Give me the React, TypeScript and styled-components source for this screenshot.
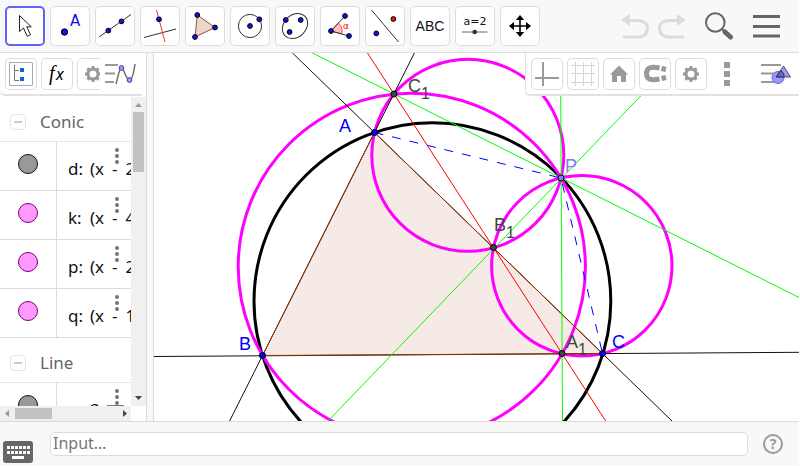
import React from "react";
import styled, { createGlobalStyle, css } from "styled-components";

const GlobalStyle = createGlobalStyle`
  * { box-sizing: border-box; }
  body { margin: 0; background: #fff; font-family: "Noto Sans", "Open Sans", sans-serif; }
  button { font: inherit; cursor: pointer; }
`;

const Page = styled.div`
  display: flex;
  flex-direction: column;
  height: 100vh;
  padding: 0 1px 1px 0;
  overflow: hidden;
`;

const Header = styled.header`
  display: flex;
  justify-content: space-between;
  align-items: center;
  flex: none;
  height: 53px;
  padding: 0 18px 0 5px;
  background: #f8f8f8;
  border-bottom: 1px solid #dcdcdc;
`;

const ToolList = styled.div`
  display: flex;
  gap: 5px;
`;

const ToolButton = styled.button<{ $active?: boolean }>`
  width: 40px;
  height: 40px;
  padding: 0;
  border: 0;
  border-radius: 5px;
  background: #fff;
  box-shadow: inset 0 0 0 ${(p) => (p.$active ? "2px #6161ff" : "1px #dcdcdc")};
  svg { display: block; }
`;

const HeaderActions = styled.div`
  display: flex;
  align-items: center;
  gap: 9px;
`;

const PlainButton = styled.button`
  display: block;
  flex: none;
  padding: 0;
  border: 0;
  background: none;
  svg { display: block; }
`;

const SearchButton = styled(PlainButton)`
  margin-left: 10px;
`;

const MenuButton = styled(PlainButton)`
  margin-left: 9px;
`;

const Workspace = styled.main`
  display: flex;
  flex: 1;
  min-height: 0;
`;

const AlgebraPanel = styled.section`
  display: flex;
  flex-direction: column;
  flex: none;
  width: 147px;
  border-right: 1px solid #dcdcdc;
`;

const Splitter = styled.div`
  flex: none;
  width: 7px;
  background: #f8f8f8;
  border-right: 1px solid #dcdcdc;
`;

const barStyle = css`
  display: flex;
  align-items: center;
  height: 43px;
  background: #fff;
  border-bottom: 2px solid #e2e2e2;
  border-bottom-left-radius: 5px;
`;

const AlgebraBar = styled.div`
  ${barStyle}
  flex: none;
  margin-right: 4px;
  padding-left: 5px;
`;

const BarButtons = styled.div`
  display: flex;
  gap: 4px;
  width: 95px;
  overflow: hidden;
`;

const SmallButton = styled.button`
  flex: none;
  width: 32px;
  height: 32px;
  padding: 0;
  border: 0;
  border-radius: 5px;
  background: #fff;
  box-shadow: inset 0 0 0 1px #dcdcdc;
  svg { display: block; }
`;

const CurveButton = styled(PlainButton)`
  margin-left: 4px;
`;

const ListArea = styled.div`
  display: grid;
  grid-template-columns: minmax(0, 1fr) 15px;
  grid-template-rows: minmax(0, 1fr) 15px;
  flex: 1;
  min-height: 0;
  margin-top: 1px;
`;

const ObjectList = styled.div`
  overflow: hidden;
`;

const Group = styled.div`
  display: flex;
  align-items: center;
  gap: 14px;
  height: 45px;
  padding: 5px 0 0 10px;
  border-bottom: 1px solid #e6e6e6;
  color: #666;
  font-size: 17px;
  line-height: 24px;
`;

const Collapse = styled.button`
  width: 16px;
  height: 16px;
  padding: 0 3px;
  border: 1px solid #e4e4e4;
  border-radius: 4px;
  background: #fff;
  &::before {
    content: "";
    display: block;
    height: 2px;
    background: #ccc;
  }
`;

const ObjectRow = styled.div`
  display: flex;
  height: 49px;
  border-bottom: 1px solid #dcdcdc;
`;

const MarkerCell = styled.div`
  display: flex;
  justify-content: center;
  flex: none;
  width: 57px;
  padding-top: 12px;
  border-right: 1px solid #dcdcdc;
`;

const Marker = styled.button<{ $tone: "gray" | "pink" }>`
  width: 20px;
  height: 20px;
  padding: 0;
  border: 1px solid ${(p) => (p.$tone === "gray" ? "#111" : "#7a007a")};
  border-radius: 50%;
  background: ${(p) => (p.$tone === "gray" ? "#999" : "#ff99ff")};
`;

const Formula = styled.div`
  position: relative;
  flex: 1;
  min-width: 0;
  padding: 15px 0 0 11px;
  overflow: hidden;
  white-space: nowrap;
  color: #111;
  font-size: 17px;
  line-height: 24px;
`;

const ObjectName = styled.span`
  display: inline-block;
  width: 14px;
`;

const Term = styled.span`
  margin-left: 8px;
`;

const RootSign = styled.span`
  display: inline-block;
  width: 17px;
  height: 16px;
  margin-left: 7px;
  border: solid #777;
  border-width: 1px 0 0 1px;
  vertical-align: text-bottom;
`;

const MoreButton = styled.button`
  position: absolute;
  top: 6px;
  right: 12px;
  display: flex;
  flex-direction: column;
  gap: 2px;
  padding: 0;
  border: 0;
  background: none;
`;

const Dot = styled.span`
  width: 4px;
  height: 4px;
  border-radius: 50%;
  background: #757575;
`;

const ScrollTrack = styled.div<{ $horizontal?: boolean }>`
  display: flex;
  flex-direction: ${(p) => (p.$horizontal ? "row" : "column")};
  align-items: center;
  justify-content: space-between;
  background: #f0f0f0;
  svg { display: block; flex: none; }
`;

const ScrollThumb = styled.div<{ $horizontal?: boolean }>`
  flex: none;
  width: ${(p) => (p.$horizontal ? "37px" : "11px")};
  height: ${(p) => (p.$horizontal ? "11px" : "60px")};
  background: #c1c1c1;
`;

const ScrollSpace = styled.div`
  flex: 1;
`;

const GraphicsPanel = styled.section`
  position: relative;
  flex: 1;
  min-width: 0;
  overflow: hidden;
`;

const Drawing = styled.svg`
  display: block;
  width: 100%;
  height: 100%;
  font-family: "Liberation Sans", Arial, sans-serif;
`;

const GraphicsBar = styled.div`
  ${barStyle}
  position: absolute;
  top: 0;
  right: 0;
  gap: 4px;
  padding: 0 6px 0 5px;
  border-left: 1px solid #e2e2e2;
`;

const MoreOptions = styled(PlainButton)`
  display: flex;
  flex-direction: column;
  gap: 3px;
  margin: 0 27px 0 13px;
`;

const Square = styled.span`
  width: 6px;
  height: 6px;
  background: #999;
`;

const InputBar = styled.footer`
  display: flex;
  align-items: center;
  flex: none;
  height: 44px;
  padding: 0 16px 0 3px;
  background: #f8f8f8;
  border-top: 1px solid #dcdcdc;
`;

const KeyboardButton = styled(PlainButton)`
  align-self: flex-end;
  margin-bottom: 2px;
`;

const CommandInput = styled.input`
  flex: 1;
  min-width: 0;
  height: 24px;
  margin: 0 15px 0 17px;
  padding: 0 2px 2px;
  border: 1px solid #dcdcdc;
  border-radius: 5px;
  background: #fff;
  color: #222;
  font: 16px/20px "Noto Sans", "Open Sans", sans-serif;
  &::placeholder { color: #757575; opacity: 1; }
`;

type Pt = [number, number];

const Node = ({ at, fill = "#1010ee", r = 2.4 }: { at: Pt; fill?: string; r?: number }) => (
  <circle cx={at[0]} cy={at[1]} r={r} fill={fill} stroke="#000" strokeWidth="1" />
);

const tools: { name: string; icon: React.ReactNode }[] = [
  {
    name: "Move",
    icon: <path d="M14.5 9.5V25.5L18.5 22L22.2 30.3L25.5 28.8L21.8 20.8H26.3Z" fill="#fff" stroke="#222" />,
  },
  {
    name: "Point",
    icon: (
      <>
        <Node at={[14.5, 26]} r={3.2} />
        <text x="20" y="20" fontFamily="DejaVu Sans, sans-serif" fontSize="15" fill="#1010ee">A</text>
      </>
    ),
  },
  {
    name: "Line",
    icon: (
      <>
        <path d="M4 31L36 8.5" stroke="#333" />
        <Node at={[13.3, 24.6]} />
        <Node at={[26.5, 15.4]} />
      </>
    ),
  },
  {
    name: "Perpendicular line",
    icon: (
      <>
        <path d="M4 31.5L36 23" stroke="#333" />
        <path d="M16.5 4L25 36" stroke="#f33" />
        <Node at={[19, 13.3]} />
      </>
    ),
  },
  {
    name: "Polygon",
    icon: (
      <>
        <path d="M12.3 9L30 21.5L10 31Z" fill="#ebd6cc" stroke="#995033" />
        <Node at={[12.3, 9]} />
        <Node at={[30, 21.5]} />
        <Node at={[10, 31]} />
      </>
    ),
  },
  {
    name: "Circle with center",
    icon: (
      <>
        <circle cx="20" cy="20" r="11.6" stroke="#333" />
        <Node at={[20, 20]} />
        <Node at={[29.3, 13.3]} />
      </>
    ),
  },
  {
    name: "Ellipse",
    icon: (
      <>
        <ellipse cx="20" cy="20" rx="14" ry="11" transform="rotate(-45 20 20)" stroke="#333" />
        <Node at={[10.8, 14]} />
        <Node at={[25.7, 14]} />
        <Node at={[14.6, 26]} />
      </>
    ),
  },
  {
    name: "Angle",
    icon: (
      <>
        <path d="M11 25L18.4 17A11 11 0 0 1 21.7 28Z" fill="#ffbfbf" stroke="#f55" />
        <path d="M25 10L11 25L29 30" stroke="#333" />
        <text x="23" y="23" fontFamily="DejaVu Sans, sans-serif" fontSize="9" fill="#f00">α</text>
        <Node at={[25, 10]} />
        <Node at={[11, 25]} />
        <Node at={[29, 30]} />
      </>
    ),
  },
  {
    name: "Reflect about line",
    icon: (
      <>
        <path d="M6.5 4L33.5 36" stroke="#333" />
        <Node at={[11.3, 27.4]} />
        <Node at={[28.4, 13]} fill="#f01010" />
      </>
    ),
  },
  {
    name: "Text",
    icon: <text x="20" y="25" textAnchor="middle" fontSize="14" fontFamily="Liberation Sans, sans-serif" fill="#111">ABC</text>,
  },
  {
    name: "Slider",
    icon: (
      <>
        <text x="20" y="19" textAnchor="middle" fontSize="11" fontFamily="DejaVu Sans, sans-serif" fill="#111">a=2</text>
        <path d="M7 26H32.5" stroke="#666" />
        <circle cx="19.7" cy="26" r="2.3" fill="#333" />
      </>
    ),
  },
  {
    name: "Move graphics view",
    icon: (
      <path
        d="M20 9L24.2 14H20.8V19.2H26V16L31 20L26 24.2V20.8H20.8V26H24.2L20 31L15.8 26H19.2V20.8H14V24.2L9 20L14 16V19.2H19.2V14H15.8Z"
        fill="#000"
      />
    ),
  },
];

const Gear = () => (
  <svg width="32" height="32" fill="none" stroke="#999" aria-hidden="true">
    <circle cx="16" cy="16" r="5" strokeWidth="3" />
    <path
      strokeWidth="3"
      d="M16 8V11M16 21V24M8 16H11M21 16H24M10.4 10.4L12.4 12.4M19.6 19.6L21.6 21.6M10.4 21.6L12.4 19.6M19.6 12.4L21.6 10.4"
    />
  </svg>
);

const rows = [
  { name: "d", tone: "gray", value: "2" },
  { name: "k", tone: "pink", value: "4" },
  { name: "p", tone: "pink", value: "2" },
  { name: "q", tone: "pink", value: "1" },
] as const;

const More = ({ label }: { label: string }) => (
  <MoreButton aria-label={label}>
    <Dot />
    <Dot />
    <Dot />
  </MoreButton>
);

const A: Pt = [374.5, 132.5];
const B: Pt = [262.5, 355.5];
const C: Pt = [602.5, 353.5];
const P: Pt = [561, 178];
const A1: Pt = [562, 353.5];
const B1: Pt = [493.5, 247.5];
const C1: Pt = [394, 94];

const Construction = () => (
  <Drawing viewBox="154 53 645 368" preserveAspectRatio="xMinYMin slice" fill="none" role="img" aria-label="Simson line construction">
    <path d={`M${A}L${B}L${C}Z`} fill="#993300" fillOpacity="0.1" />
    <circle cx="432.4" cy="301.2" r="178.4" stroke="#000" strokeWidth="3" />
    <g stroke="#f0f" strokeWidth="3">
      <circle cx="411.8" cy="266.8" r="173.6" />
      <circle cx="467.8" cy="155.3" r="96" />
      <circle cx="581.8" cy="265.8" r="90.2" />
    </g>
    <g stroke="#111" strokeWidth="1">
      <path d="M154 356.5L799 352.3M292.5 53L672 421M414.4 53L229.6 421" />
    </g>
    <path d={`M${A}L${B}L${C}Z`} stroke="#993300" strokeWidth="1" />
    <g stroke="#0f0" strokeWidth="1">
      <path d="M560.5 53L562.5 421M312.5 53L799 297.5M682 53L328 421" />
    </g>
    <path d="M367.5 53L605.7 421" stroke="#f00" />
    <path d={`M${A}L${P}L${C}`} stroke="#00f" strokeDasharray="9 9" />
    <g stroke="#000" strokeWidth="1">
      {[A, B, C].map((p) => <circle key={p[0]} cx={p[0]} cy={p[1]} r="3" fill="#00f" />)}
      {[A1, B1, C1].map((p) => <circle key={p[0]} cx={p[0]} cy={p[1]} r="3" fill="#444" />)}
      <circle cx={P[0]} cy={P[1]} r="3" fill="#7d7dff" />
    </g>
    <g fontSize="18" fill="#00f">
      <text x="339" y="132">A</text>
      <text x="239" y="350">B</text>
      <text x="612" y="348">C</text>
      <text x="565" y="172" fill="#7d7dff">P</text>
    </g>
    <g fontSize="18" fill="#444">
      <text x="408" y="92">C<tspan dy="7" fontSize="16">1</tspan></text>
      <text x="494" y="231">B<tspan dy="7" fontSize="16">1</tspan></text>
      <text x="566" y="348">A<tspan dy="7" fontSize="16">1</tspan></text>
    </g>
  </Drawing>
);

export default function App() {
  return (
    <Page>
      <GlobalStyle />
      <Header>
        <ToolList role="toolbar" aria-label="Tools">
          {tools.map((tool, i) => (
            <ToolButton key={tool.name} $active={i === 0} aria-label={tool.name}>
              <svg width="40" height="40" fill="none">{tool.icon}</svg>
            </ToolButton>
          ))}
        </ToolList>
        <HeaderActions>
          <PlainButton aria-label="Undo">
            <svg width="28" height="26" fill="none">
              <path d="M8 7.5H17C22 7.5 26.5 10 26.5 15.5C26.5 21 22 24 17 24H2" stroke="#dcdcdc" strokeWidth="3" />
              <path d="M0 7L9 1V13Z" fill="#dcdcdc" />
            </svg>
          </PlainButton>
          <PlainButton aria-label="Redo">
            <svg width="28" height="26" fill="none">
              <path d="M20 7.5H11C6 7.5 1.5 10 1.5 15.5C1.5 21 6 24 11 24H26" stroke="#dcdcdc" strokeWidth="3" />
              <path d="M28 7L19 1V13Z" fill="#dcdcdc" />
            </svg>
          </PlainButton>
          <SearchButton aria-label="Search">
            <svg width="30" height="30" fill="none" stroke="#666">
              <circle cx="10.3" cy="11.5" r="9.3" strokeWidth="2" />
              <path d="M17 18L20 21" strokeWidth="2" />
              <path d="M20 21L25.5 26" strokeWidth="5" strokeLinecap="round" />
            </svg>
          </SearchButton>
          <MenuButton aria-label="Menu">
            <svg width="28" height="26" stroke="#666" strokeWidth="3">
              <path d="M0 3.5H27M0 13.5H27M0 23H27" />
            </svg>
          </MenuButton>
        </HeaderActions>
      </Header>

      <Workspace>
        <AlgebraPanel>
          <AlgebraBar>
            <BarButtons>
              <SmallButton aria-label="Sort objects">
                <svg width="32" height="32" fill="none">
                  <path d="M4.5 4.5H27.5V27.5H4.5Z" stroke="#aaa" />
                  <path d="M9.5 7V22.5H14M9.5 12.5H14" stroke="#777" />
                  <path d="M15 10H19V14H15ZM15 19H19V23H15Z" fill="#06d" />
                </svg>
              </SmallButton>
              <SmallButton aria-label="Auxiliary objects">
                <svg width="32" height="32" fill="#000">
                  <text x="8" y="22" fontFamily="Liberation Serif, serif" fontStyle="italic" fontSize="20">f</text>
                  <text x="15" y="22" fontFamily="Noto Sans, sans-serif" fontStyle="italic" fontSize="16">x</text>
                </svg>
              </SmallButton>
              <SmallButton aria-label="Settings"><Gear /></SmallButton>
            </BarButtons>
            <CurveButton aria-label="Style bar">
              <svg width="32" height="32" fill="none">
                <path d="M1 7H14M1 15.5H11M1 24H10" stroke="#999" strokeWidth="2" />
                <path d="M12 26C14 20 15 10 17.5 10S22 22 25.5 22S30 12 31 6" stroke="#666" strokeWidth="1.4" />
                <circle cx="17.4" cy="10" r="2.4" fill="#99f" stroke="#44a" />
                <circle cx="25.5" cy="22" r="2.4" fill="#99f" stroke="#44a" />
              </svg>
            </CurveButton>
          </AlgebraBar>
          <ListArea>
            <ObjectList>
              <Group><Collapse aria-label="Collapse Conic" />Conic</Group>
              {rows.map((row) => (
                <ObjectRow key={row.name}>
                  <MarkerCell><Marker $tone={row.tone} aria-label={`Toggle ${row.name}`} /></MarkerCell>
                  <Formula>
                    <ObjectName>{row.name}:</ObjectName><Term>(x</Term><Term>-</Term><Term>{row.value}</Term>
                    <More label={`More for ${row.name}`} />
                  </Formula>
                </ObjectRow>
              ))}
              <Group><Collapse aria-label="Collapse Line" />Line</Group>
              <ObjectRow>
                <MarkerCell><Marker $tone="gray" aria-label="Toggle line" /></MarkerCell>
                <Formula><ObjectName /><Term>3</Term><RootSign /><More label="More for line" /></Formula>
              </ObjectRow>
            </ObjectList>
            <ScrollTrack>
              <svg width="15" height="15"><path d="M4 10L7.5 6L11 10Z" fill="#999" /></svg>
              <ScrollThumb />
              <ScrollSpace />
              <svg width="15" height="15"><path d="M4 5L7.5 9L11 5Z" fill="#444" /></svg>
            </ScrollTrack>
            <ScrollTrack $horizontal>
              <svg width="15" height="15"><path d="M9 4L5 7.5L9 11Z" fill="#999" /></svg>
              <ScrollThumb $horizontal />
              <ScrollSpace />
              <svg width="15" height="15"><path d="M7 4L11 7.5L7 11Z" fill="#444" /></svg>
            </ScrollTrack>
          </ListArea>
        </AlgebraPanel>
        <Splitter />
        <GraphicsPanel>
          <Construction />
          <GraphicsBar>
            <SmallButton aria-label="Axes">
              <svg width="32" height="32"><path d="M12 4V28M4 20H28" stroke="#999" strokeWidth="2" /></svg>
            </SmallButton>
            <SmallButton aria-label="Grid">
              <svg width="32" height="32"><path d="M8.5 4V28M16.5 4V28M24.5 4V28M4 7.5H28M4 15.5H28M4 24.5H28" stroke="#d4d4d4" /></svg>
            </SmallButton>
            <SmallButton aria-label="Standard view">
              <svg width="32" height="32"><path d="M16 7.5L25 16.5H23V24H18V18H14V24H9V16.5H7Z" fill="#999" /></svg>
            </SmallButton>
            <SmallButton aria-label="Snapping">
              <svg width="32" height="32" fill="none" stroke="#999" strokeWidth="5">
                <path d="M20.5 10C11 8 7.5 10 7.5 15.5S11 23 20.5 21M22.5 10.5L27 11.5M22.5 20.5L27 19.5" />
              </svg>
            </SmallButton>
            <SmallButton aria-label="Settings"><Gear /></SmallButton>
            <MoreOptions aria-label="More options"><Square /><Square /><Square /></MoreOptions>
            <PlainButton aria-label="Style bar">
              <svg width="32" height="32" fill="none">
                <path d="M0 7H20M0 15.5H18M0 24H14" stroke="#999" strokeWidth="2" />
                <circle cx="17" cy="19.5" r="6" fill="#99f" stroke="#66d" />
                <path d="M22.5 8L29.5 19H15Z" fill="#99f" stroke="#555" />
                <path d="M20 12.2L15.5 19H23A6 6 0 0 0 20 13Z" fill="#66d" stroke="#333" />
              </svg>
            </PlainButton>
          </GraphicsBar>
        </GraphicsPanel>
      </Workspace>

      <InputBar>
        <KeyboardButton aria-label="Show keyboard">
          <svg width="30" height="22">
            <rect width="30" height="22" rx="3" fill="#666" />
            <path d="M4 6.5H27M4 11.5H27" stroke="#fff" strokeWidth="3" strokeDasharray="3 1" />
            <path d="M9 16.5H21" stroke="#fff" strokeWidth="3" />
          </svg>
        </KeyboardButton>
        <CommandInput aria-label="Input" placeholder="Input…" />
        <PlainButton aria-label="Help">
          <svg width="20" height="20">
            <circle cx="10" cy="10" r="9" fill="none" stroke="#999" strokeWidth="2" />
            <text x="10" y="15" textAnchor="middle" fontFamily="Noto Sans, sans-serif" fontWeight="700" fontSize="14" fill="#999">?</text>
          </svg>
        </PlainButton>
      </InputBar>
    </Page>
  );
}
